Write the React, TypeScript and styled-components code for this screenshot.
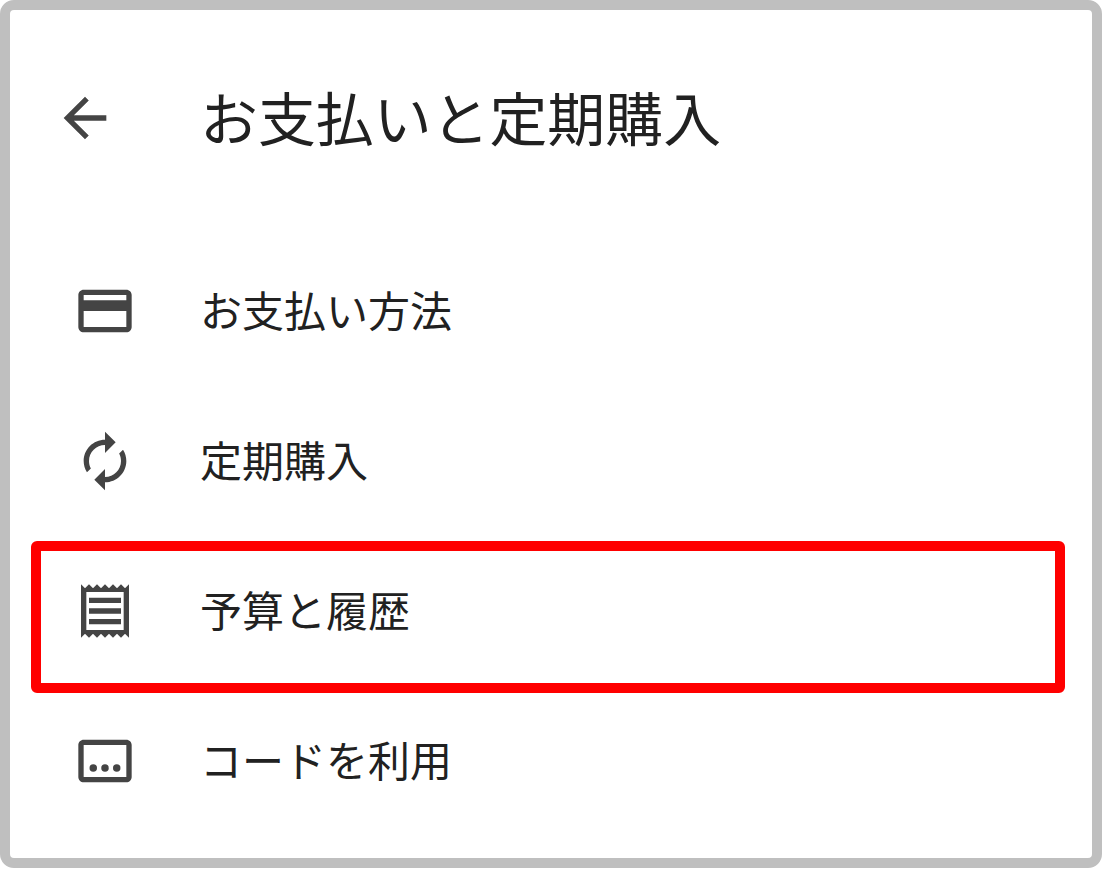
import styled, { createGlobalStyle } from "styled-components";
import { ReactNode } from "react";

const GlobalStyle = createGlobalStyle`
    html, body {
        margin: 0;
        padding: 0;
        background: #fff;
    }
    body {
        font-family: "Noto Sans CJK JP", "Noto Sans", sans-serif;
    }
`;

const Frame = styled.div`
    box-sizing: border-box;
    width: 1102px;
    height: 868px;
    border: 10px solid #bfbfbf;
    border-radius: 14px;
    background: #fff;
    overflow: hidden;
`;

const Header = styled.header`
    display: flex;
    align-items: center;
    height: 64px;
    margin-top: 76px;
    padding-left: 43px;
`;

const BackIcon = styled.svg`
    width: 64px;
    height: 64px;
    fill: #444;
    flex: none;
`;

const Title = styled.h1`
    margin: 0 0 0 83px;
    padding-bottom: 5px;
    font-size: 57.9px;
    font-weight: 400;
    line-height: 64px;
    color: #212121;
    white-space: nowrap;
`;

const Menu = styled.ul`
    list-style: none;
    margin: 86px 0 0;
    padding: 0;
`;

const Row = styled.li<{ $marked?: boolean }>`
    position: relative;
    display: flex;
    align-items: center;
    height: 150px;
    padding-left: 63px;
    ${(p) =>
        p.$marked &&
        `
        &::after {
            content: "";
            position: absolute;
            top: 5px;
            bottom: -7px;
            left: 21px;
            right: 27px;
            border: 10px solid #ff0000;
            border-radius: 6px;
        }
    `}
`;

const RowIcon = styled.svg`
    width: 64px;
    height: 64px;
    fill: #444;
    flex: none;
`;

const RowLabel = styled.span`
    margin-left: 63px;
    padding-bottom: 4px;
    font-size: 42px;
    line-height: 64px;
    color: #212121;
    white-space: nowrap;
`;

function MenuRow({ label, marked, children }: { label: string; marked?: boolean; children: ReactNode }) {
    return (
        <Row $marked={marked}>
            <RowIcon viewBox="0 0 24 24">{children}</RowIcon>
            <RowLabel>{label}</RowLabel>
        </Row>
    );
}

export default function App() {
    return (
        <>
            <GlobalStyle />
            <Frame>
                <Header>
                    <BackIcon viewBox="0 0 24 24">
                        <path d="M20 11H7.83l5.59-5.59L12 4l-8 8 8 8 1.41-1.41L7.83 13H20v-2z" />
                    </BackIcon>
                    <Title>お支払いと定期購入</Title>
                </Header>
                <Menu>
                    <MenuRow label="お支払い方法">
                        <path d="M20 4H4c-1.11 0-1.99.89-1.99 2L2 18c0 1.11.89 2 2 2h16c1.11 0 2-.89 2-2V6c0-1.11-.89-2-2-2zm0 14H4v-6h16v6zm0-10H4V6h16v2z" />
                    </MenuRow>
                    <MenuRow label="定期購入">
                        <path d="M12 6v3l4-4-4-4v3c-4.42 0-8 3.58-8 8 0 1.57.46 3.03 1.24 4.26L6.7 14.8c-.45-.83-.7-1.79-.7-2.8 0-3.31 2.69-6 6-6zm6.76 1.74L17.3 9.2c.44.84.7 1.79.7 2.8 0 3.31-2.69 6-6 6v-3l-4 4 4 4v-3c4.42 0 8-3.58 8-8 0-1.57-.46-3.03-1.24-4.26z" />
                    </MenuRow>
                    <MenuRow label="予算と履歴" marked>
                        <path d="M19.5 3.5L18 2l-1.5 1.5L15 2l-1.5 1.5L12 2l-1.5 1.5L9 2 7.5 3.5 6 2 4.5 3.5 3 2v20l1.5-1.5L6 22l1.5-1.5L9 22l1.5-1.5L12 22l1.5-1.5L15 22l1.5-1.5L18 22l1.5-1.5L21 22V2l-1.5 1.5zM19 19.09H5V4.91h14v14.18zM6 15h12v2H6zm0-4h12v2H6zm0-4h12v2H6z" />
                    </MenuRow>
                    <MenuRow label="コードを利用">
                        <path d="M20 4H4c-1.11 0-2 .89-2 2v12c0 1.11.89 2 2 2h16c1.11 0 2-.89 2-2V6c0-1.11-.89-2-2-2zm0 14H4V6h16v12z" />
                        <circle cx="7.6" cy="14.6" r="1.4" />
                        <circle cx="12" cy="14.6" r="1.4" />
                        <circle cx="16.4" cy="14.6" r="1.4" />
                    </MenuRow>
                </Menu>
            </Frame>
        </>
    );
}
